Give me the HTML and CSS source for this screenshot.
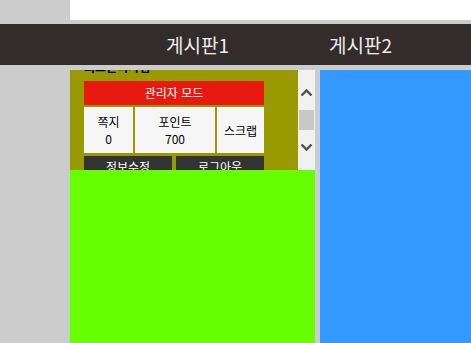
FILE: index.html
```html
<!DOCTYPE html>
<html lang="ko">
<head>
    <meta charset="UTF-8">
    <title>게시판</title>
    <link rel="stylesheet" href="styles.css">
</head>
<body>
    <!-- 상단 로고 영역 -->
    <div class="top-bar"></div>

    <!-- 메뉴 -->
    <div class="nav">
        <a href="#" class="nav-item">게시판1</a>
        <a href="#" class="nav-item">게시판2</a>
    </div>

    <div class="main">
        <div class="side">
            <!-- 로그인 박스 -->
            <div class="login-box">
                <div class="login-scroll">
                    <div class="login-inner">
                        <p class="welcome">최고관리자님</p>
                        <a href="#" class="admin-btn">관리자 모드</a>
                        <div class="stats">
                            <div class="stat">쪽지<br>0</div>
                            <div class="stat">포인트<br>700</div>
                            <div class="stat">스크랩</div>
                        </div>
                        <div class="btns">
                            <a href="#" class="btn">정보수정</a>
                            <a href="#" class="btn">로그아웃</a>
                        </div>
                    </div>
                </div>
                <div class="scrollbar">
                    <svg class="arrow" width="13" height="9" viewBox="0 0 13 9"><path d="M1.5 7.5 L6.5 2.5 L11.5 7.5" fill="none" stroke="#505050" stroke-width="2.4"/></svg>
                    <div class="thumb"></div>
                    <svg class="arrow" width="13" height="9" viewBox="0 0 13 9"><path d="M1.5 1.5 L6.5 6.5 L11.5 1.5" fill="none" stroke="#505050" stroke-width="2.4"/></svg>
                </div>
            </div>
            <div class="side-bottom"></div>
        </div>
        <div class="content"></div>
    </div>
</body>
</html>
```

FILE: styles.css
```css
/* 기본 */
body {
    margin: 0;
    padding: 0;
    background-color: #cccccc;
    font-family: "Noto Sans CJK KR", "Noto Sans", sans-serif;
    height: 343px;
    overflow: hidden;
}

/* 상단 */
.top-bar {
    height: 20px;
    margin-left: 70px;
    background-color: #fff;
}

/* 메뉴 */
.nav {
    display: flex;
    align-items: center;
    height: 41px;
    margin-top: 4px;
    padding-left: 166px;
    background-color: #322d2a;
}

.nav-item {
    flex-shrink: 0;
    width: 163px;
    color: #eeeeee;
    font-size: 19px;
    text-decoration: none;
}

/* 본문 */
.main {
    display: flex;
    gap: 5px;
    margin-top: 5px;
    padding-left: 70px;
}

.side {
    width: 245px;
}

.login-box {
    display: flex;
    height: 100px;
}

.login-scroll {
    flex: 1;
    background-color: #999900;
    overflow: hidden;
}

.login-inner {
    width: 180px;
    margin-top: -11px;
    padding-left: 14px;
    font-size: 12px;
}

.welcome {
    margin: 0;
    height: 22px;
    line-height: 15px;
    font-weight: bold;
    color: #000;
}

.admin-btn {
    display: block;
    height: 24px;
    line-height: 24px;
    background-color: #e81a10;
    color: #fff;
    text-align: center;
    text-decoration: none;
}

.stats {
    display: grid;
    grid-template-columns: 49px 80px 1fr;
    gap: 2px;
    margin-top: 2px;
}

.stat {
    display: flex;
    align-items: center;
    justify-content: center;
    height: 46px;
    background-color: #f6f6f6;
    text-align: center;
    line-height: 17px;
    color: #000;
}

.btns {
    display: flex;
    gap: 4px;
    margin-top: 3px;
}

.btn {
    flex: 1;
    height: 22px;
    line-height: 22px;
    background-color: #333;
    color: #fff;
    text-align: center;
    text-decoration: none;
}

/* 스크롤바 */
.scrollbar {
    display: flex;
    flex-direction: column;
    align-items: center;
    width: 17px;
    padding-top: 18px;
    background-color: #f1f1f1;
    box-sizing: border-box;
}

.thumb {
    width: 15px;
    height: 20px;
    margin: 13px 0 13px;
    background-color: #c8c8c8;
}

.side-bottom {
    height: 173px;
    background-color: #66ff00;
}

.content {
    flex: 1;
    height: 273px;
    background-color: #3399ff;
}
```
